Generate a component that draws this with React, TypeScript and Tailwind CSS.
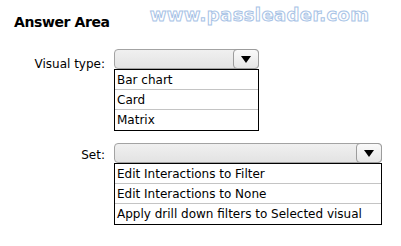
import React from "react";

type DropProps = { width: string; items: string[] };

function Dropdown({ width, items }: DropProps) {
  return (
    <div className={`${width} flex flex-col`}>
      {/* Closed select box */}
      <div className="h-[20px] flex justify-end rounded-[4px] border border-[#a3a3a3] bg-gradient-to-b from-[#f0f0f0] to-[#e3e3e3]">
        <div className="w-[24px] h-full -mr-px -mt-px box-content flex items-center justify-center rounded-[4px] border border-[#9c9c9c] bg-gradient-to-b from-[#fafafa] to-[#e6e6e6]">
          <svg width="10" height="7" viewBox="0 0 10 7">
            <path d="M0 0 H10 L5 7 Z" fill="#000" />
          </svg>
        </div>
      </div>
      {/* Options list */}
      <div className="border border-black bg-white">
        {items.map((item, i) => (
          <div
            key={item}
            className={`h-[20px] pl-[2px] flex items-center text-[12px] text-black ${
              i < items.length - 1 ? "border-b border-[#c4c4c4]" : ""
            }`}
          >
            {item}
          </div>
        ))}
      </div>
    </div>
  );
}

export default function App() {
  return (
    <div className="w-[401px] h-[246px] bg-white relative font-['DejaVu_Sans',sans-serif] text-black overflow-hidden">
      {/* Heading */}
      <div className="flex items-start h-[49px]">
        <div className="ml-[14px] mt-[12px] text-[14px] font-bold tracking-[-0.4px]">Answer Area</div>
        <div className="ml-[40px] mt-[1px] text-[18px] font-bold tracking-[0.4px] text-transparent [-webkit-text-stroke:1px_#a8c3e6]">
          www.passleader.com
        </div>
      </div>

      {/* Visual type */}
      <div className="flex items-start">
        <div className="w-[105px] text-right text-[12px] pt-[6px]">Visual type:</div>
        <div className="ml-[9px]">
          <Dropdown width="w-[145px]" items={["Bar chart", "Card", "Matrix"]} />
        </div>
      </div>

      {/* Set */}
      <div className="flex items-start mt-[12px]">
        <div className="w-[105px] text-right text-[12px] pt-[3px]">Set:</div>
        <div className="ml-[9px]">
          <Dropdown
            width="w-[268px]"
            items={[
              "Edit Interactions to Filter",
              "Edit Interactions to None",
              "Apply drill down filters to Selected visual",
            ]}
          />
        </div>
      </div>
    </div>
  );
}
